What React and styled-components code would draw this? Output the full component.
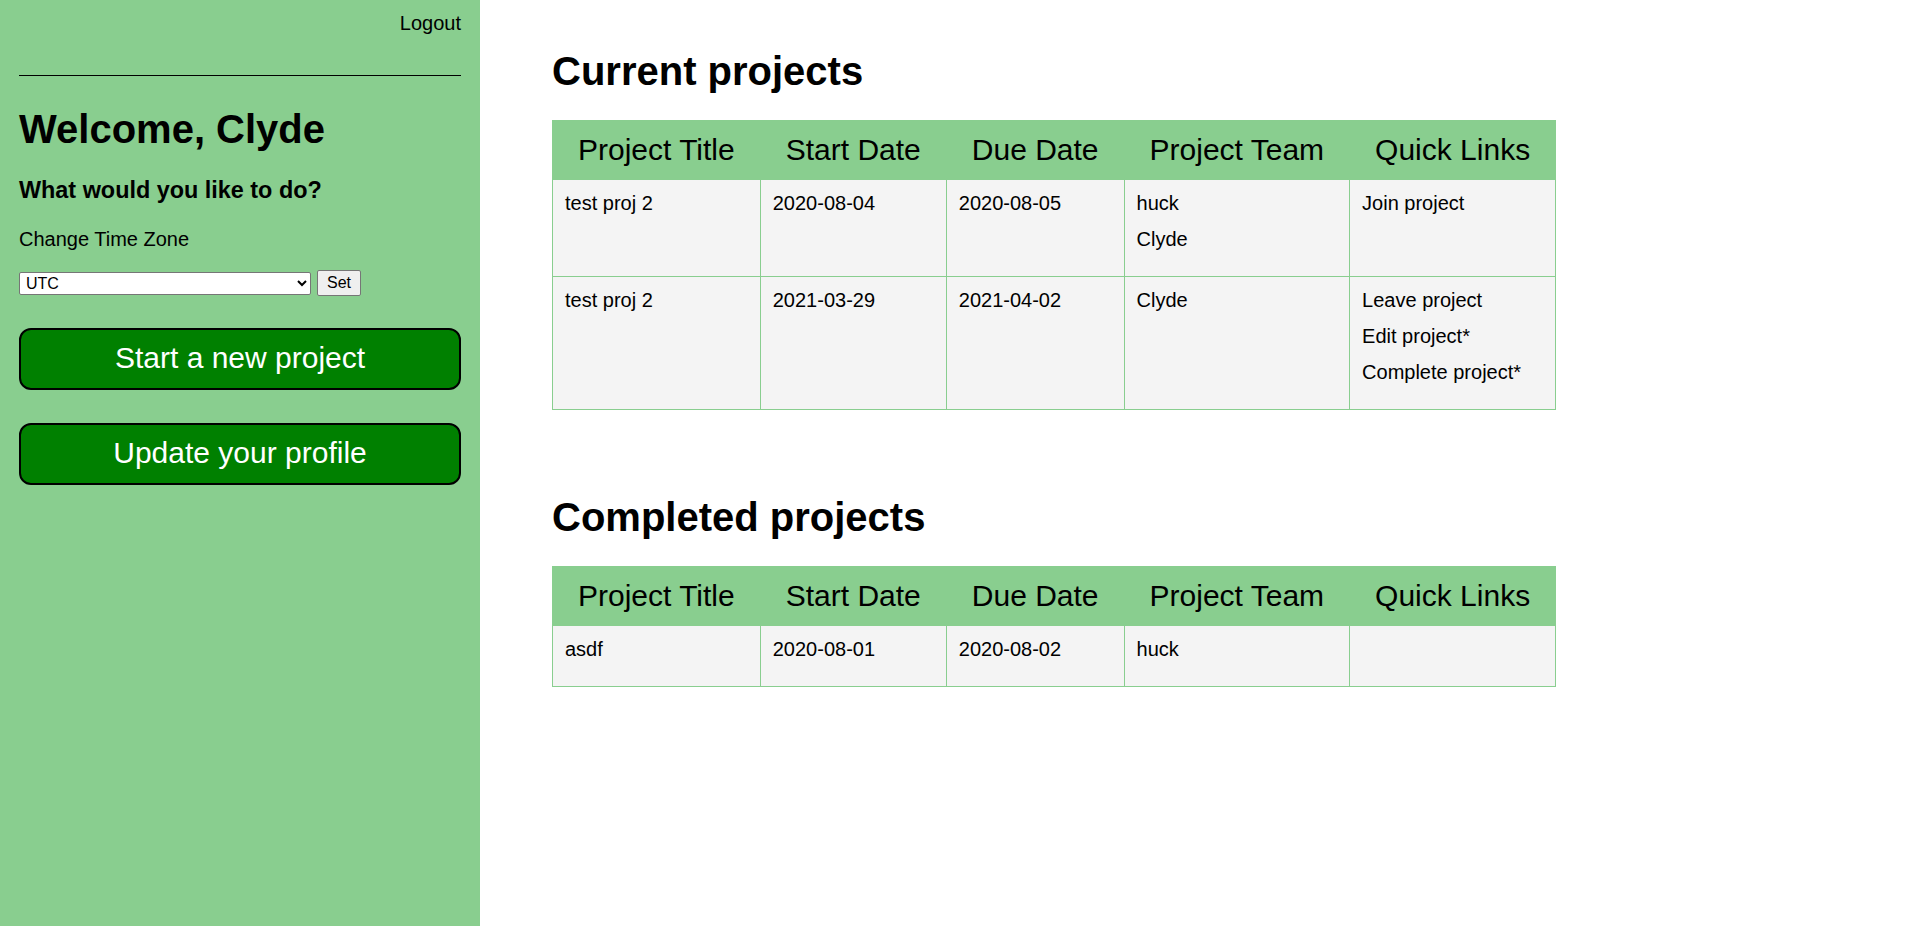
import React from "react";
import styled, { createGlobalStyle } from "styled-components";

const GREEN = "#89ce8f";

const Global = createGlobalStyle`
  html, body { margin: 0; padding: 0; background: #fff; }
  body { font-family: "Liberation Sans", Arial, sans-serif; color: #000; }
  * { box-sizing: border-box; }
`;

const Page = styled.div`
  display: flex;
  min-height: 100vh;
`;

const Sidebar = styled.aside`
  width: 480px;
  flex: 0 0 480px;
  min-height: 100vh;
  background: ${GREEN};
  padding: 12px 19px;
  display: flex;
  flex-direction: column;
`;

const LogoutLink = styled.div`
  text-align: right;
  font-size: 20px;
  line-height: 23px;
`;

const Rule = styled.hr`
  border: 0;
  border-top: 1px solid #000;
  margin: 40px 0 0;
  height: 0;
`;

const Welcome = styled.h1`
  font-size: 40px;
  line-height: 46px;
  font-weight: bold;
  margin: 30px 0 25px;
`;

const Question = styled.h3`
  font-size: 23.4px;
  line-height: 27px;
  font-weight: bold;
  margin: 0 0 24px;
`;

const Label = styled.p`
  font-size: 20px;
  line-height: 23px;
  margin: 0 0 19px;
`;

const ZoneForm = styled.form`
  display: flex;
  align-items: center;
  gap: 6px;
  margin: 0 0 32px;
`;

const ZoneSelect = styled.select`
  width: 292px;
  height: 23px;
  font-family: "Liberation Sans", Arial, sans-serif;
  font-size: 16px;
  border: 1px solid #767676;
  border-radius: 2px;
  background: #fff;
  padding: 0 2px;
  color: #000;
`;

const SetButton = styled.button`
  width: 44px;
  height: 26px;
  font-family: "Liberation Sans", Arial, sans-serif;
  font-size: 16px;
  background: #efefef;
  border: 1px solid #767676;
  border-radius: 2px;
  color: #000;
  padding: 0;
`;

const ActionButton = styled.button`
  width: 100%;
  height: 62px;
  margin: 0 0 33px;
  background: #008000;
  color: #fff;
  border: 2px solid #000;
  border-radius: 12px;
  font-family: "Liberation Sans", Arial, sans-serif;
  font-size: 30px;
  display: flex;
  align-items: center;
  justify-content: center;
  padding: 0 0 3px;
  cursor: pointer;
`;

const Main = styled.main`
  flex: 1;
  padding: 0 72px;
`;

const SectionTitle = styled.h1`
  font-size: 40px;
  line-height: 46px;
  font-weight: bold;
  margin: ${(p) => (p.$first ? "48px" : "84px")} 0 26px;
`;

const Table = styled.table`
  border-collapse: collapse;
`;

const Th = styled.th`
  background: ${GREEN};
  border: 1px solid ${GREEN};
  font-weight: normal;
  font-size: 30px;
  line-height: 34px;
  padding: 12px 25px;
  text-align: center;
  white-space: nowrap;
`;

const Td = styled.td`
  background: #f4f4f4;
  border: 1px solid ${GREEN};
  padding: 12px 12px 12px;
  vertical-align: top;
  font-size: 20px;
  line-height: 23px;
  text-align: left;
`;

const Item = styled.div`
  margin: 0 0 13px;
  white-space: nowrap;
`;

const headers = ["Project Title", "Start Date", "Due Date", "Project Team", "Quick Links"];

const current = [
  {
    title: "test proj 2",
    start: "2020-08-04",
    due: "2020-08-05",
    team: ["huck", "Clyde"],
    links: ["Join project"],
  },
  {
    title: "test proj 2",
    start: "2021-03-29",
    due: "2021-04-02",
    team: ["Clyde"],
    links: ["Leave project", "Edit project*", "Complete project*"],
  },
];

const completed = [
  {
    title: "asdf",
    start: "2020-08-01",
    due: "2020-08-02",
    team: ["huck"],
    links: [],
  },
];

function ProjectTable({ rows }) {
  return (
    <Table>
      <thead>
        <tr>
          {headers.map((h) => (
            <Th key={h}>{h}</Th>
          ))}
        </tr>
      </thead>
      <tbody>
        {rows.map((r, i) => (
          <tr key={i}>
            <Td><Item>{r.title}</Item></Td>
            <Td><Item>{r.start}</Item></Td>
            <Td><Item>{r.due}</Item></Td>
            <Td>{r.team.map((t) => <Item key={t}>{t}</Item>)}</Td>
            <Td>{r.links.map((l) => <Item key={l}>{l}</Item>)}</Td>
          </tr>
        ))}
      </tbody>
    </Table>
  );
}

export default function App() {
  return (
    <>
      <Global />
      <Page>
        <Sidebar>
          <LogoutLink>Logout</LogoutLink>
          <Rule />
          <Welcome>Welcome, Clyde</Welcome>
          <Question>What would you like to do?</Question>
          <Label>Change Time Zone</Label>
          <ZoneForm onSubmit={(e) => e.preventDefault()}>
            <ZoneSelect defaultValue="UTC">
              <option value="UTC">UTC</option>
              <option value="EST">EST</option>
              <option value="PST">PST</option>
            </ZoneSelect>
            <SetButton type="submit">Set</SetButton>
          </ZoneForm>
          <ActionButton>Start a new project</ActionButton>
          <ActionButton>Update your profile</ActionButton>
        </Sidebar>
        <Main>
          <SectionTitle $first>Current projects</SectionTitle>
          <ProjectTable rows={current} />
          <SectionTitle>Completed projects</SectionTitle>
          <ProjectTable rows={completed} />
        </Main>
      </Page>
    </>
  );
}
